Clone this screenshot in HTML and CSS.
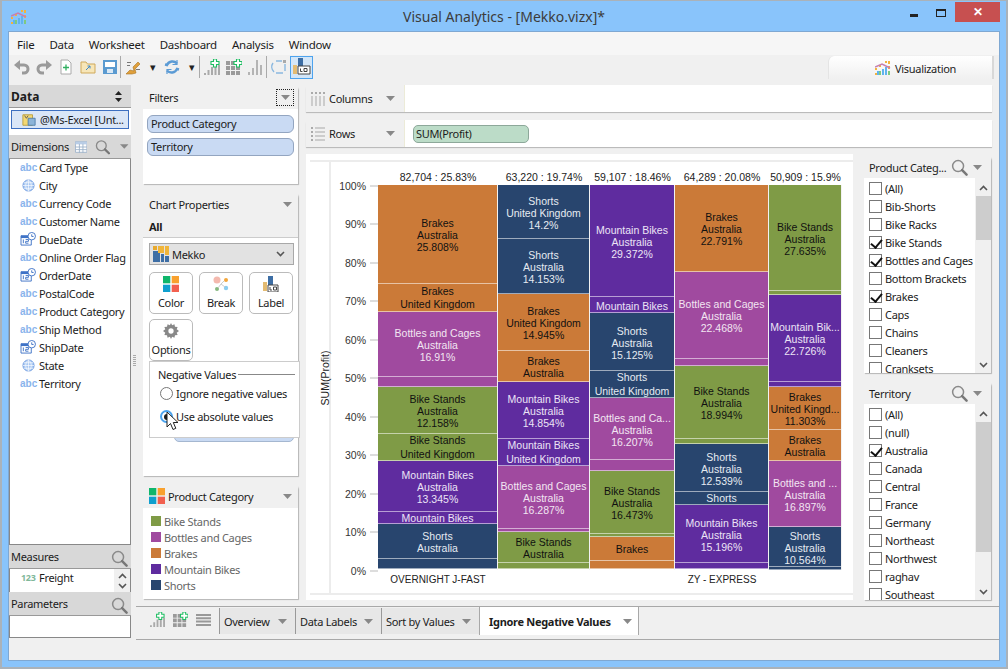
FILE: index.html
```html
<!DOCTYPE html>
<html lang="en">
<head>
<meta charset="utf-8">
<title>Visual Analytics - [Mekko.vizx]*</title>
<link rel="stylesheet" href="styles.css">
</head>
<body>
<svg class="sprite" xmlns="http://www.w3.org/2000/svg">
  <symbol id="i-search" viewBox="0 0 18 18"><circle cx="7.500" cy="7.500" r="5.800" fill="none" stroke="#8a8a8a" stroke-width="1.600"/><path d="M11.800 11.800L16.500 16.500" stroke="#777" stroke-width="2.600" stroke-linecap="round"/></symbol>
  <symbol id="i-globe" viewBox="0 0 14 14"><circle cx="7" cy="7" r="6" fill="#a9c8f2" stroke="#6f9ce0"/><path d="M1 7h12M7 1v12M2 4h10M2 10h10M7 1c-4 3-4 9 0 12M7 1c4 3 4 9 0 12" fill="none" stroke="#fff" stroke-width=".7"/></symbol>
  <symbol id="i-date" viewBox="0 0 17 15"><path d="M1 4h11v10H1z" fill="#fff" stroke="#3f73c6"/><path d="M1 4h11v2.500H1z" fill="#3f73c6"/><path d="M3.500 8v4M6 8h3v2H6v2h3" fill="none" stroke="#3f73c6"/><circle cx="12.500" cy="4.500" r="4" fill="#fff" stroke="#3f73c6"/><path d="M12.500 2.500v2.300h2" fill="none" stroke="#3f73c6"/></symbol>
  <symbol id="i-color" viewBox="0 0 16 16"><path d="M0 0h7.300v7.300H0z" fill="#0fb66b"/><path d="M8.700 0H16v7.300H8.700z" fill="#f9a12e"/><path d="M0 8.700h7.300V16H0z" fill="#0f9fce"/><path d="M8.700 8.700H16V16H8.700z" fill="#f2604f"/></symbol>
  <symbol id="i-addchart" viewBox="0 0 16 16"><path d="M0 14h2v2H0zM3.500 11h2v5h-2zM7 8h2v8H7zM10.500 8h2v8h-2zM14 6h2v10h-2z" fill="#aaa"/><path d="M9 3h2.500V.5h3V3H17v3h-2.500v2.500h-3V6H9z" transform="translate(-2 -.5)" fill="#fff" stroke="#1fbd62" stroke-width="1.100"/></symbol>
  <symbol id="i-addgrid" viewBox="0 0 16 16"><path d="M0 2h4v4H0zM5 2h4v4H5zM0 7h4v4H0zM5 7h4v4H5zM10 7h4v4h-4zM0 12h4v4H0zM5 12h4v4H5zM10 12h4v4h-4z" fill="#9a9a9a"/><path d="M9 3h2.500V.5h3V3H17v3h-2.500v2.500h-3V6H9z" transform="translate(-1 -.5)" fill="#fff" stroke="#1fbd62" stroke-width="1.100"/></symbol>
  <symbol id="i-rows" viewBox="0 0 15 12"><path d="M0 0h15v2H0zM0 3.300h15v2H0zM0 6.600h15v2H0zM0 9.900h15v2H0z" fill="#999"/></symbol>
  <symbol id="i-viz" viewBox="0 0 16 16"><path d="M2 11h2v4H2zM7 9h2v6H7zM10 7h2v8h-2z" fill="#5fb4ee"/><path d="M13 1h2v3h-2zM13 6h2v3h-2z" fill="#f3b33d"/><path d="M0 8h2v2H0zM0 13h2v2H0zM4 5h2v2H4zM10 1h2v2h-2z" fill="#f3b33d"/><path d="M0 7l7-3 8 4" fill="none" stroke="#c77fb0" stroke-width="1.400"/><path d="M4 11h2v4H4zM13 11h2v4h-2z" fill="#7fc97f"/></symbol>
  <symbol id="i-caret" viewBox="0 0 9 5"><path d="M0 0h9L4.500 5z" fill="#888"/></symbol>
  <symbol id="i-up" viewBox="0 0 9 6"><path d="M1 5l3.500-3.500L8 5" fill="none" stroke="#555" stroke-width="1.600"/></symbol>
  <symbol id="i-down" viewBox="0 0 9 6"><path d="M1 1l3.500 3.500L8 1" fill="none" stroke="#555" stroke-width="1.600"/></symbol>
</svg>

<div class="window">
  <header class="titlebar">
    <svg class="app-icon"><use href="#i-viz"/></svg>
    <span class="title">Visual Analytics - [Mekko.vizx]*</span>
    <div class="winbtns">
      <span class="win-min"></span>
      <span class="win-max"></span>
      <span class="win-close">✕</span>
    </div>
  </header>

  <div class="client">
    <nav class="menubar">
      <span>File</span><span>Data</span><span>Worksheet</span><span>Dashboard</span><span>Analysis</span><span>Window</span>
    </nav>

    <div class="toolbar">
      <svg class="tb" viewBox="0 0 16 16"><path d="M0 6l6-5v10z" fill="#9a9a9a"/><path d="M4 6h6a4 4 0 0 1 0 8H8" fill="none" stroke="#9a9a9a" stroke-width="3"/></svg>
      <svg class="tb" viewBox="0 0 16 16"><path d="M16 6l-6-5v10z" fill="#9a9a9a"/><path d="M12 6H6a4 4 0 0 0 0 8h2" fill="none" stroke="#9a9a9a" stroke-width="3"/></svg>
      <svg class="tb" viewBox="0 0 16 16"><path d="M3 1h7l3 3v11H3z" fill="#fff" stroke="#aaa"/><path d="M8 5.500v6M5 8.500h6" stroke="#30b060" stroke-width="1.300"/></svg>
      <svg class="tb" viewBox="0 0 16 16"><path d="M1 3h5l1.500 2H15v9H1z" fill="#f7e6b8" stroke="#cfa95a"/><path d="M6 11l4-4M7.500 7H10v2.500" fill="none" stroke="#3d87c8"/></svg>
      <svg class="tb" viewBox="0 0 16 16"><path d="M2 2h12v12H2z" fill="#fff" stroke="#5a9ad0" stroke-width="2"/><path d="M2 8h12v6H2z" fill="#5a9ad0"/><path d="M5 10h6v4H5z" fill="#d9e8f5"/></svg>
      <span class="tb-sep"></span>
      <svg class="tb" viewBox="0 0 16 16"><path d="M1 15l4-4 4 1-1-4 5-5 2 2-5 5 1 4-4 1z" fill="#e0a03c" stroke="#a97422" stroke-width=".6"/><path d="M2 3h4v1H2zM2 6h3v1H2zM11 10h4v1h-4z" fill="#777"/></svg>
      <span class="tb-caret">▾</span>
      <svg class="tb" viewBox="0 0 16 16"><path d="M13 4.500A6 6 0 0 0 3 6l-2-.5M3 11.500A6 6 0 0 0 13 10l2 .5" fill="none" stroke="#5b9bd5" stroke-width="2.400"/><path d="M13 1v4.500H8.500M3 15v-4.500h4.500" fill="none" stroke="#5b9bd5" stroke-width="1.200"/></svg>
      <span class="tb-caret">▾</span>
      <span class="tb-sep"></span>
      <svg class="tb"><use href="#i-addchart"/></svg>
      <svg class="tb"><use href="#i-addgrid"/></svg>
      <svg class="tb" viewBox="0 0 16 16"><path d="M0 13h2v3H0zM4 9h2v7H4zM8 1h2v15H8zM12 6h2v10h-2z" fill="#b4b4b4"/></svg>
      <span class="tb-sep"></span>
      <svg class="tb" viewBox="0 0 16 16"><path d="M2 4a7 7 0 0 0 1 9M5 14h7M14 12V5M11 2H5" fill="none" stroke="#8ab8e0" stroke-width="1.400"/><path d="M12 1h3v3h-3z" fill="#aaa"/></svg>
      <span class="tb-active">
        <svg class="tb-ai" viewBox="0 0 18 18"><path d="M0 7h4v9H0z" fill="#e3bb72"/><path d="M5 0h5v11H5z" fill="#3d6ea5"/><path d="M5 8h12v8H5z" fill="#fff" stroke="#444"/><path d="M7.500 10.500v3h2M11 10.500h3v3h-3z" fill="none" stroke="#444"/></svg>
      </span>
      <div class="viz-tab">
        <svg class="viz-icon"><use href="#i-viz"/></svg>
        <span>Visualization</span>
      </div>
    </div>

    <main class="main">
      <aside class="sidebar">
        <div class="side-head side-data"><b>Data</b><svg class="updown" viewBox="0 0 7 11"><path d="M3.500 0L7 4H0zM3.500 11L0 7h7z" fill="#222"/></svg></div>
        <div class="source-wrap">
          <div class="source">
            <svg class="source-icon" viewBox="0 0 16 14"><path d="M1 1h11v12H1z" fill="#f3d873" stroke="#b89b3a"/><path d="M7 5h8v8H7z" fill="#8cb4d8" stroke="#4d7da8"/><path d="M3 2l2 3 2-3" fill="none" stroke="#555"/></svg>
            <span>@Ms-Excel [Unt...</span>
          </div>
        </div>
        <div class="side-head side-dim">
          <span>Dimensions</span>
          <svg class="dim-table" viewBox="0 0 14 13"><path d="M.5.500h13v12H.5z" fill="#fff" stroke="#9bb0c8"/><path d="M.5.500h13v3H.500z" fill="#b9cde6"/><path d="M.5 6.500h13M.5 9.500h13M5 3v10M9 3v10" stroke="#9bb0c8" fill="none"/></svg>
          <svg class="side-search"><use href="#i-search"/></svg>
          <svg class="side-caret"><use href="#i-caret"/></svg>
        </div>
        <ul class="dimlist">
          <li><span class="abc">abc</span>Card Type</li>
          <li><span class="fi"><svg class="globe"><use href="#i-globe"/></svg></span>City</li>
          <li><span class="abc">abc</span>Currency Code</li>
          <li><span class="abc">abc</span>Customer Name</li>
          <li><span class="fi"><svg class="date"><use href="#i-date"/></svg></span>DueDate</li>
          <li><span class="abc">abc</span>Online Order Flag</li>
          <li><span class="fi"><svg class="date"><use href="#i-date"/></svg></span>OrderDate</li>
          <li><span class="abc">abc</span>PostalCode</li>
          <li><span class="abc">abc</span>Product Category</li>
          <li><span class="abc">abc</span>Ship Method</li>
          <li><span class="fi"><svg class="date"><use href="#i-date"/></svg></span>ShipDate</li>
          <li><span class="fi"><svg class="globe"><use href="#i-globe"/></svg></span>State</li>
          <li><span class="abc">abc</span>Territory</li>
        </ul>
        <div class="side-head side-sub"><span>Measures</span><svg class="sub-search"><use href="#i-search"/></svg></div>
        <div class="measure">
          <span class="n123">123</span><span class="m-text">Freight</span>
          <span class="m-scroll"><svg class="m-arrow"><use href="#i-up"/></svg><svg class="m-arrow"><use href="#i-down"/></svg></span>
        </div>
        <div class="side-head side-sub"><span>Parameters</span><svg class="sub-search"><use href="#i-search"/></svg></div>
        <div class="params"></div>
      </aside>

      <span class="splitter"></span>

      <section class="work">
        <div class="work-top">
          <div class="midcol">
            <section class="panel filters">
              <header class="panel-head">
                <span>Filters</span>
                <span class="dotted"><svg class="cap"><use href="#i-caret"/></svg></span>
              </header>
              <div class="pills">
                <div class="pill">Product Category</div>
                <div class="pill">Territory</div>
              </div>
            </section>

            <section class="panel props">
              <header class="panel-head"><span>Chart Properties</span><svg class="cap"><use href="#i-caret"/></svg></header>
              <div class="all">All</div>
              <div class="chart-select">
                <svg class="mekko-ico" viewBox="0 0 16 16"><path d="M0 0h4v4H0z" fill="#e8a92e"/><path d="M0 5h7v11H0z" fill="#3d6ea5"/><path d="M5 0h6v7H5z" fill="#f0b53a"/><path d="M12 0h4v9h-4z" fill="#f0b53a"/><path d="M8 8h3v8H8zM12 10h4v6h-4z" fill="#3d6ea5"/></svg>
                <span>Mekko</span>
                <svg class="chev"><use href="#i-down"/></svg>
              </div>
              <div class="prop-btns">
                <div class="prop-btn"><svg class="pb-ico"><use href="#i-color"/></svg><span>Color</span></div>
                <div class="prop-btn"><svg class="pb-ico" viewBox="0 0 16 16"><circle cx="4" cy="4" r="3.500" fill="#f4b9ae"/><circle cx="13" cy="4" r="2" fill="#f3a63b"/><circle cx="4" cy="13" r="2" fill="#86b97f"/><circle cx="13" cy="12" r="2.200" fill="#8ccdf0"/><path d="M8 8l3-3M8 8l-3 4M8 8l4 3" stroke="#ccc"/></svg><span>Break</span></div>
                <div class="prop-btn"><svg class="pb-ico" viewBox="0 0 16 16"><path d="M0 6h4v9H0z" fill="#e3bb72"/><path d="M5 0h5v10H5z" fill="#3d6ea5"/><path d="M5 9h10v7H5z" fill="#fff" stroke="#444"/><path d="M7 11v3h2M10.500 11h3v3h-3z" fill="none" stroke="#444"/></svg><span>Label</span></div>
                <div class="prop-btn"><svg class="pb-ico" viewBox="0 0 14 14"><path d="M7 0l1 2 2-1 .5 2.200 2.300.3-.8 2 2 1.500-2 1.500.8 2-2.300.3L10 13l-2-1-1 2-1-2-2 1-.5-2.200-2.300-.3.8-2L0 7l2-1.500-.8-2 2.300-.3L4 1l2 1z" fill="#888"/><circle cx="7" cy="7" r="2.300" fill="#fff"/></svg><span>Options</span></div>
              </div>
              <div class="under-btn"></div>
              <div class="popup">
                <div class="legend-line"><span>Negative Values</span><i></i></div>
                <label class="radio-row"><span class="radio"></span>Ignore negative values</label>
                <label class="radio-row"><span class="radio on"></span>Use absolute values</label>
                <svg class="cursor" viewBox="0 0 13 20"><path d="M1 1v15l3.500-3.500L7 18.500l2.800-1.200-2.500-5.800H12z" fill="#fff" stroke="#222"/></svg>
              </div>
            </section>

            <section class="panel legend">
              <header class="panel-head"><svg class="leg-ico"><use href="#i-color"/></svg><span class="leg-title">Product Category</span><svg class="cap"><use href="#i-caret"/></svg></header>
              <ul class="leg-list">
                <li><i class="sw c-green"></i>Bike Stands</li>
                <li><i class="sw c-mag"></i>Bottles and Cages</li>
                <li><i class="sw c-org"></i>Brakes</li>
                <li><i class="sw c-pur"></i>Mountain Bikes</li>
                <li><i class="sw c-nav"></i>Shorts</li>
              </ul>
            </section>
          </div>

          <div class="rightcol">
            <div class="shelf">
              <div class="shelf-label"><svg class="shelf-ico" viewBox="0 0 14 14"><path d="M0 0h2v2H0zM4 0h2v2H4zM8 0h2v2H8zM12 0h2v2h-2z" fill="#aaa"/><path d="M0 4h2v10H0zM4 4h2v10H4zM8 4h2v10H8zM12 4h2v10h-2z" fill="#ccc"/></svg><span>Columns</span><svg class="cap"><use href="#i-caret"/></svg></div>
              <div class="shelf-body"></div>
            </div>
            <div class="shelf">
              <div class="shelf-label"><svg class="shelf-ico" viewBox="0 0 14 14"><path d="M0 0h2v2H0zM0 4h2v2H0zM0 8h2v2H0zM0 12h2v2H0z" fill="#aaa"/><path d="M4 0h10v2H4zM4 4h10v2H4zM4 8h10v2H4zM4 12h10v2H4z" fill="#ccc"/></svg><span>Rows</span><svg class="cap"><use href="#i-caret"/></svg></div>
              <div class="shelf-body"><div class="green-pill">SUM(Profit)</div></div>
            </div>

            <div class="lower">
              <section class="chart">
                <div class="frame">
                  <div class="ytitle"><span>SUM(Profit)</span></div>
                  <div class="yaxis">
                    <span>100%</span><span>90%</span><span>80%</span><span>70%</span><span>60%</span><span>50%</span><span>40%</span><span>30%</span><span>20%</span><span>10%</span><span>0%</span>
                  </div>
                  <div class="plot">
                    <div class="col" style="width:120px">
                      <div class="col-top">82,704 : 25.83%</div>
                      <div class="bars">
                        <div class="seg c-org" style="height:99px">Brakes<br>Australia<br>25.808%</div>
                        <div class="seg c-org tw" style="height:28px">Brakes<br>United Kingdom</div>
                        <div class="seg c-mag" style="height:65px">Bottles and Cages<br>Australia<br>16.91%</div>
                        <div class="seg c-mag" style="height:10px"></div>
                        <div class="seg c-green" style="height:47px">Bike Stands<br>Australia<br>12.158%</div>
                        <div class="seg c-green tw" style="height:27px">Bike Stands<br>United Kingdom</div>
                        <div class="seg c-pur" style="height:51px">Mountain Bikes<br>Australia<br>13.345%</div>
                        <div class="seg c-pur one" style="height:12px">Mountain Bikes</div>
                        <div class="seg c-nav" style="height:35px">Shorts<br>Australia</div>
                        <div class="seg c-nav" style="height:10px"></div>
                      </div>
                      <div class="col-foot">OVERNIGHT J-FAST</div>
                    </div>
                    <div class="col" style="width:92px">
                      <div class="col-top">63,220 : 19.74%</div>
                      <div class="bars">
                        <div class="seg c-nav" style="height:54px">Shorts<br>United Kingdom<br>14.2%</div>
                        <div class="seg c-nav" style="height:55px">Shorts<br>Australia<br>14.153%</div>
                        <div class="seg c-org" style="height:57px">Brakes<br>United Kingdom<br>14.945%</div>
                        <div class="seg c-org" style="height:31px">Brakes<br>Australia</div>
                        <div class="seg c-pur" style="height:57px">Mountain Bikes<br>Australia<br>14.854%</div>
                        <div class="seg c-pur tw" style="height:27px">Mountain Bikes<br>United Kingdom</div>
                        <div class="seg c-mag" style="height:63px">Bottles and Cages<br>Australia<br>16.287%</div>
                        <div class="seg c-mag" style="height:3px"></div>
                        <div class="seg c-green" style="height:31px">Bike Stands<br>Australia</div>
                        <div class="seg c-green" style="height:6px"></div>
                      </div>
                      <div class="col-foot"></div>
                    </div>
                    <div class="col" style="width:85px">
                      <div class="col-top">59,107 : 18.46%</div>
                      <div class="bars">
                        <div class="seg c-pur" style="height:112px">Mountain Bikes<br>Australia<br>29.372%</div>
                        <div class="seg c-pur" style="height:16px">Mountain Bikes</div>
                        <div class="seg c-nav" style="height:58px">Shorts<br>Australia<br>15.125%</div>
                        <div class="seg c-nav tw" style="height:27px">Shorts<br>United Kingdom</div>
                        <div class="seg c-mag" style="height:62px">Bottles and Ca...<br>Australia<br>16.207%</div>
                        <div class="seg c-mag" style="height:11px"></div>
                        <div class="seg c-green" style="height:63px">Bike Stands<br>Australia<br>16.473%</div>
                        <div class="seg c-green" style="height:3px"></div>
                        <div class="seg c-org one" style="height:24px">Brakes</div>
                        <div class="seg c-org" style="height:8px"></div>
                      </div>
                      <div class="col-foot"></div>
                    </div>
                    <div class="col" style="width:94px">
                      <div class="col-top">64,289 : 20.08%</div>
                      <div class="bars">
                        <div class="seg c-org" style="height:87px">Brakes<br>Australia<br>22.791%</div>
                        <div class="seg c-mag" style="height:87px">Bottles and Cages<br>Australia<br>22.468%</div>
                        <div class="seg c-mag" style="height:7px"></div>
                        <div class="seg c-green" style="height:73px">Bike Stands<br>Australia<br>18.994%</div>
                        <div class="seg c-green" style="height:5px"></div>
                        <div class="seg c-nav" style="height:48px">Shorts<br>Australia<br>12.539%</div>
                        <div class="seg c-nav one" style="height:13px">Shorts</div>
                        <div class="seg c-pur" style="height:58px">Mountain Bikes<br>Australia<br>15.196%</div>
                        <div class="seg c-pur" style="height:6px"></div>
                      </div>
                      <div class="col-foot">ZY - EXPRESS</div>
                    </div>
                    <div class="col" style="width:73px">
                      <div class="col-top">50,909 : 15.9%</div>
                      <div class="bars">
                        <div class="seg c-green" style="height:106px">Bike Stands<br>Australia<br>27.635%</div>
                        <div class="seg c-green" style="height:4px"></div>
                        <div class="seg c-pur" style="height:87px">Mountain Bik...<br>Australia<br>22.726%</div>
                        <div class="seg c-pur" style="height:5px"></div>
                        <div class="seg c-org" style="height:43px">Brakes<br>United Kingd...<br>11.303%</div>
                        <div class="seg c-org" style="height:31px">Brakes<br>Australia</div>
                        <div class="seg c-mag" style="height:66px">Bottles and ...<br>Australia<br>16.897%</div>
                        <div class="seg c-nav" style="height:40px">Shorts<br>Australia<br>10.564%</div>
                        <div class="seg c-nav" style="height:2px"></div>
                      </div>
                      <div class="col-foot"></div>
                    </div>
                  </div>
                </div>
              </section>

              <div class="filtercol">
                <section class="panel qf qf-a">
                  <header class="panel-head qf-head"><span class="qf-title">Product Categ...</span><svg class="qf-search"><use href="#i-search"/></svg><svg class="cap"><use href="#i-caret"/></svg></header>
                  <div class="qf-body">
                    <ul class="qf-list">
                      <li><i class="cb"></i>(All)</li>
                      <li><i class="cb"></i>Bib-Shorts</li>
                      <li><i class="cb"></i>Bike Racks</li>
                      <li><i class="cb on"></i>Bike Stands</li>
                      <li><i class="cb on"></i>Bottles and Cages</li>
                      <li><i class="cb"></i>Bottom Brackets</li>
                      <li><i class="cb on"></i>Brakes</li>
                      <li><i class="cb"></i>Caps</li>
                      <li><i class="cb"></i>Chains</li>
                      <li><i class="cb"></i>Cleaners</li>
                      <li><i class="cb"></i>Cranksets</li>
                    </ul>
                    <div class="scroll">
                      <svg class="arrow"><use href="#i-up"/></svg>
                      <div class="track t1"></div>
                      <svg class="arrow"><use href="#i-down"/></svg>
                    </div>
                  </div>
                </section>
                <section class="panel qf">
                  <header class="panel-head qf-head"><span class="qf-title">Territory</span><svg class="qf-search"><use href="#i-search"/></svg><svg class="cap"><use href="#i-caret"/></svg></header>
                  <div class="qf-body">
                    <ul class="qf-list">
                      <li><i class="cb"></i>(All)</li>
                      <li><i class="cb"></i>(null)</li>
                      <li><i class="cb on"></i>Australia</li>
                      <li><i class="cb"></i>Canada</li>
                      <li><i class="cb"></i>Central</li>
                      <li><i class="cb"></i>France</li>
                      <li><i class="cb"></i>Germany</li>
                      <li><i class="cb"></i>Northeast</li>
                      <li><i class="cb"></i>Northwest</li>
                      <li><i class="cb"></i>raghav</li>
                      <li><i class="cb"></i>Southeast</li>
                    </ul>
                    <div class="scroll">
                      <svg class="arrow"><use href="#i-up"/></svg>
                      <div class="track t2"></div>
                      <svg class="arrow"><use href="#i-down"/></svg>
                    </div>
                  </div>
                </section>
              </div>
            </div>
          </div>
        </div>

        <div class="tabbar">
          <div class="tab-tools">
            <svg class="tt"><use href="#i-addchart"/></svg>
            <svg class="tt"><use href="#i-addgrid"/></svg>
            <svg class="tt tt-rows"><use href="#i-rows"/></svg>
          </div>
          <div class="tab t1w"><span>Overview</span><svg class="cap"><use href="#i-caret"/></svg></div>
          <div class="tab t2w"><span>Data Labels</span><svg class="cap"><use href="#i-caret"/></svg></div>
          <div class="tab t3w"><span>Sort by Values</span><svg class="cap"><use href="#i-caret"/></svg></div>
          <div class="tab active"><span>Ignore Negative Values</span><svg class="cap"><use href="#i-caret"/></svg></div>
        </div>
      </section>
    </main>

    <footer class="status"></footer>
  </div>
</div>
</body>
</html>
```

FILE: styles.css
```css
* { box-sizing: border-box; }
html, body { margin: 0; padding: 0; }
body {
  width: 1008px;
  height: 669px;
  overflow: hidden;
  font-family: "Noto Sans", "Liberation Sans", sans-serif;
  font-size: 11px;
  letter-spacing: -.3px;
  color: #1c1c1c;
}
ul { list-style: none; margin: 0; padding: 0; }
.sprite { display: none; }

.window {
  width: 1008px;
  height: 669px;
  display: flex;
  flex-direction: column;
  background: #89c4fb;
  border: solid #aab2b9;
  border-width: 1px 2px 2px 2px;
}

/* title bar */
.titlebar {
  height: 30px;
  display: flex;
  align-items: center;
  position: relative;
  flex: none;
}
.app-icon { width: 16px; height: 16px; margin-left: 9px; margin-top: 2px; }
.title {
  position: absolute;
  left: 0; right: 0;
  top: 6px;
  text-align: center;
  font-size: 14px;
  letter-spacing: 0;
  line-height: 20px;
  color: #3c3c3c;
}
.winbtns {
  position: absolute;
  top: 1px; right: 6px;
  display: flex;
  align-items: flex-start;
}
.win-min { width: 8px; height: 3px; background: #222; margin: 12px 18px 0 0; }
.win-max { width: 10px; height: 8px; border: 1px solid #222; border-top-width: 2px; margin: 7px 9px 0 0; }
.win-close {
  width: 45px; height: 20px;
  background: #c75050;
  color: #fff;
  font-size: 12px;
  font-weight: bold;
  line-height: 20px;
  text-align: center;
}

.client {
  flex: 1;
  margin: 0 6px 6px 6px;
  border: 1px solid #7fa8d2;
  background: #f0f0f0;
  display: flex;
  flex-direction: column;
  min-height: 0;
}

.menubar {
  height: 23px;
  flex: none;
  display: flex;
  align-items: center;
  gap: 15px;
  padding: 2px 0 0 8px;
  background: #f6f6f6;
  font-size: 11.500px;
  letter-spacing: -.25px;
}

/* toolbar */
.toolbar {
  height: 29px;
  flex: none;
  display: flex;
  align-items: center;
  background: #f0f0f0;
  padding: 0 0 5px 5px;
  position: relative;
}
.tb { width: 16px; height: 16px; margin-right: 6px; flex: none; }
.tb-sep { width: 1px; height: 22px; background: #aaa; margin: 0 4px 0 -4px; flex: none; }
.tb-caret { font-size: 11px; line-height: 16px; width: 8px; margin: 0 6px 0 3px; color: #222; flex: none; }
.tb-active {
  width: 23px; height: 23px;
  border: 1px solid #4da3ee;
  background: #d3e6f8;
  display: flex; align-items: center; justify-content: center;
  margin-left: -3px;
}
.tb-ai { width: 18px; height: 18px; }
.viz-tab {
  position: absolute;
  right: 5px; top: 1px;
  width: 166px; height: 23px;
  background: linear-gradient(#fff, #f0f0f0);
  border-top-left-radius: 6px;
  border-left: 1px solid #e4e4e4;
  border-right: 2px solid #d8d8d8;
  display: flex; align-items: center;
  padding: 1px 0 0 46px;
  gap: 4px;
}
.viz-icon { width: 16px; height: 16px; }

.main { flex: 1; display: flex; min-height: 0; }

/* sidebar */
.sidebar {
  width: 122px;
  flex: none;
  display: flex;
  flex-direction: column;
}
.side-head {
  background: #d8d8d8;
  display: flex;
  align-items: center;
  padding: 0 2px;
  flex: none;
  position: relative;
}
.side-data { height: 23px; margin-top: 1px; font-size: 12px; letter-spacing: 0; border-bottom: 1px solid #999; }
.updown { position: absolute; right: 9px; top: 6px; width: 7px; height: 11px; }
.source-wrap { background: #fff; height: 27px; padding: 2px; flex: none; }
.source {
  height: 19px;
  border: 1px solid #3c6fc0;
  background: #d9e6f7;
  display: flex; align-items: center;
  padding-left: 10px;
  gap: 4px;
  white-space: nowrap;
}
.source-icon { width: 14px; height: 14px; flex: none; }
.side-dim { height: 24px; border-bottom: 1px solid #999; }
.dim-table { width: 13px; height: 12px; margin-left: 6px; }
.side-search { width: 16px; height: 16px; margin-left: 8px; }
.side-caret { width: 9px; height: 5px; margin-left: 10px; }
.dimlist {
  flex: 1;
  background: #fff;
  border-left: 1px solid #888;
  border-right: 1px solid #888;
  border-bottom: 1px solid #888;
  min-height: 0;
}
.dimlist li { height: 18px; display: flex; align-items: center; white-space: nowrap; padding-bottom: 2px; }
.abc {
  width: 29px;
  padding-left: 10px;
  color: #8ab4ec;
  font-family: "Liberation Sans", Arial, sans-serif;
  font-size: 10px;
  letter-spacing: 0;
  font-weight: bold;
  flex: none;
}
.fi { width: 29px; padding-left: 10px; flex: none; display: flex; align-items: center; }
.globe { width: 13px; height: 13px; margin-left: 2px; }
.date { width: 16px; height: 14px; }
.side-sub { height: 24px; border-bottom: 1px solid #999; }
.sub-search { position: absolute; right: 3px; top: 5px; width: 17px; height: 17px; }
.measure {
  height: 23px;
  flex: none;
  background: #fff;
  border-left: 1px solid #888;
  border-right: 1px solid #888;
  display: flex;
  align-items: flex-start;
  padding-left: 11px;
  line-height: 18px;
  position: relative;
}
.n123 { color: #7fb89a; font-size: 9px; font-weight: bold; width: 18px; }
.m-scroll {
  position: absolute;
  right: 0; top: 0; bottom: 0;
  width: 16px;
  background: #f0f0f0;
  display: flex; flex-direction: column;
  align-items: center;
  justify-content: center;
  gap: 4px;
}
.m-arrow { width: 9px; height: 6px; }
.params {
  height: 22px;
  flex: none;
  background: #fff;
  border: 1px solid #888;
  border-top: 0;
  margin-bottom: 2px;
}

.splitter {
  width: 12px; flex: none;
  background: repeating-linear-gradient(#aaa 0 1px, transparent 1px 2px) 2px 271px / 3px 12px no-repeat;
}

.work { flex: 1; display: flex; flex-direction: column; min-width: 0; margin-left: -7px; }
.work-top { height: 522px; flex: none; display: flex; padding-left: 7px; }

/* panels */
.midcol { width: 155px; flex: none; display: flex; flex-direction: column; gap: 8px; padding-top: 1px; }
.panel {
  background: #fff;
  box-shadow: 1px 1px 1px #b5b5b5;
  border-top-left-radius: 5px;
  border-top-right-radius: 5px;
  position: relative;
}
.panel-head {
  height: 24px;
  background: #f0f0f0;
  display: flex;
  align-items: center;
  padding: 0 6px;
  justify-content: space-between;
}
.cap { width: 9px; height: 5px; flex: none; }
.filters { height: 99px; }
.dotted {
  width: 18px; height: 17px;
  border: 1px dotted #222;
  display: flex; align-items: center; justify-content: center;
  margin-right: -2px;
}
.pills { padding: 6px 4px; display: flex; flex-direction: column; gap: 5px; }
.pill {
  height: 18px;
  background: #c9daf3;
  border: 1px solid #93a5c0;
  border-radius: 6px;
  line-height: 15px;
  padding-left: 3px;
}
.props { height: 284px; }
.props .panel-head { height: 25px; }
.all {
  height: 21px;
  background: #f0f0f0;
  border-bottom: 1px solid #ccc;
  font-weight: bold;
  line-height: 20px;
  padding-left: 6px;
}
.chart-select {
  height: 22px;
  margin: 5px 4px 0 6px;
  background: #e2e2e2;
  border: 1px solid #a8a8a8;
  display: flex; align-items: center;
  padding: 0 8px 0 3px;
  gap: 3px;
}
.mekko-ico { width: 16px; height: 16px; }
.chev { width: 9px; height: 6px; margin-left: auto; }
.prop-btns {
  display: grid;
  grid-template-columns: repeat(3, 44px);
  column-gap: 6px;
  row-gap: 5px;
  margin: 7px 0 0 6px;
}
.prop-btn {
  height: 42px;
  border: 1px solid #bbb;
  border-radius: 5px;
  display: flex; flex-direction: column;
  align-items: center;
  padding-top: 3px;
  gap: 4px;
  line-height: 14px;
  background: #fff;
}
.pb-ico { width: 16px; height: 16px; }
.under-btn {
  position: absolute;
  left: 31px; top: 236px;
  width: 120px; height: 14px;
  background: #c9daf3;
  border: 1px solid #a5b7d0;
  border-radius: 5px;
}
.popup {
  position: absolute;
  left: 6px; top: 169px;
  width: 151px; height: 77px;
  background: #fff;
  border: 1px solid #ccc;
  padding: 4px 4px 0 8px;
  z-index: 2;
}
.legend-line { display: flex; align-items: center; gap: 2px; height: 16px; }
.legend-line i { flex: 1; height: 1px; background: #888; }
.radio-row { display: flex; align-items: center; height: 23px; gap: 3px; padding-left: 2px; }
.radio { width: 13px; height: 13px; border: 1px solid #777; border-radius: 50%; background: #fff; flex: none; position: relative; }
.radio.on { border: 2px solid #4ba3ee; }
.radio.on::after { content: ""; position: absolute; left: 1.500px; top: 1.500px; width: 6px; height: 6px; background: #1c1c1c; border-radius: 50%; }
.cursor { position: absolute; left: 16px; top: 49px; width: 13px; height: 20px; }
.legend { height: 115px; }
.leg-ico { width: 16px; height: 16px; flex: none; }
.leg-title { margin-right: auto; margin-left: 3px; }
.leg-list { padding: 5px 0 0 8px; color: #666; }
.leg-list li { height: 16px; display: flex; align-items: center; gap: 3px; }
.sw { width: 10px; height: 10px; flex: none; }
.c-green { background: #7f9b46; color: #111; }
.c-mag { background: #a04a9f; color: #f2e6f2; }
.c-org { background: #cb7a38; color: #111; }
.c-pur { background: #5f2c9f; color: #ece4f6; }
.c-nav { background: #28456e; color: #e6ebf2; }

/* right column */
.rightcol { flex: 1; min-width: 0; display: flex; flex-direction: column; padding: 1px 7px 0 8px; }
.shelf {
  height: 27px;
  flex: none;
  display: flex;
  background: #fff;
  box-shadow: 0 1px 1px #b5b5b5;
  border-top-left-radius: 4px;
  margin-bottom: 8px;
}
.shelf-label {
  width: 98px; flex: none;
  background: #f0f0f0;
  display: flex; align-items: center;
  padding-left: 5px;
}
.shelf-label .cap { margin-left: auto; margin-right: 9px; }
.shelf-ico { width: 14px; height: 14px; margin-right: 4px; }
.shelf-body { flex: 1; border-left: 1px solid #ecebd8; display: flex; align-items: center; padding-left: 8px; }
.green-pill {
  width: 116px; height: 18px;
  background: #bcdcc8;
  border: 1px solid #8da89a;
  border-radius: 5px;
  line-height: 15px;
  padding-left: 2px;
}
.lower { flex: 1; min-height: 0; display: flex; margin-top: -1px; }

/* chart */
.chart {
  width: 547px;
  flex: none;
  height: 446px;
  background: #fff;
  padding: 6px 0 5px 4px;
}
.frame {
  height: 435px;
  border-top: 2px solid #ececec;
  border-bottom: 2px solid #ececec;
  display: flex;
  font-family: "Liberation Sans", Arial, sans-serif;
  font-size: 10.500px;
  letter-spacing: 0;
}
.ytitle {
  width: 21px; flex: none;
  border-right: 2px solid #ececec;
  display: flex; align-items: center; justify-content: center;
  padding-left: 11px;
}
.ytitle span { transform: rotate(-90deg); white-space: nowrap; color: #222; }
.yaxis {
  width: 47px;
  flex: none;
  margin: 17.500px 0 16px;
  display: flex; flex-direction: column;
  justify-content: space-between;
  align-items: stretch;
  text-align: right;
}
.yaxis span {
  display: block;
  line-height: 12px;
  padding-right: 12px;
  color: #333;
  background: linear-gradient(#ddd, #ddd) right center / 8px 2px no-repeat;
}
.plot { display: flex; flex: none; }
.col { flex: none; display: flex; flex-direction: column; }
.col-top {
  height: 23px;
  line-height: 30px;
  text-align: center;
  white-space: nowrap;
  color: #222;
  margin: 0 -10px;
}
.bars { height: 385px; display: flex; flex-direction: column; border-right: 1px solid #f2f2f2; }
.seg {
  flex: none;
  border-bottom: 1px solid rgba(255, 255, 255, .55);
  padding-top: 2px;
  display: flex;
  align-items: center;
  justify-content: center;
  text-align: center;
  line-height: 12px;
  overflow: hidden;
  white-space: nowrap;
}
.seg.tw { line-height: 13.500px; padding-top: 1px; }
.seg.one { padding-top: 0; }
.col-foot { height: 20px; line-height: 20px; font-size: 10px; text-align: center; white-space: nowrap; margin: 0 -10px; color: #222; }

/* quick filters */
.filtercol { width: 127px; flex: none; margin-left: 11px; display: flex; flex-direction: column; gap: 8px; padding-top: 1px; }
.qf { height: 219px; display: flex; flex-direction: column; }
.qf-a { height: 218px; }
.qf-head { height: 23px; flex: none; padding: 2px 9px 0 5px; justify-content: flex-start; }
.qf-title { margin-right: auto; white-space: nowrap; }
.qf-search { width: 17px; height: 17px; margin-right: 5px; flex: none; }
.qf-body { flex: 1; min-height: 0; display: flex; overflow: hidden; }
.qf-list { flex: 1; min-width: 0; padding: 1px 0 0 5px; overflow: hidden; }
.qf-list li { height: 18px; display: flex; align-items: center; gap: 3px; white-space: nowrap; }
.cb { width: 13px; height: 13px; border: 1px solid #777; background: #fff; flex: none; position: relative; }
.cb.on::after {
  content: "";
  position: absolute;
  left: 3px; top: 0;
  width: 5px; height: 9px;
  border: solid #111;
  border-width: 0 2px 2px 0;
  transform: rotate(40deg);
}
.scroll { width: 16px; flex: none; background: #f0f0f0; display: flex; flex-direction: column; align-items: center; }
.arrow { width: 9px; height: 6px; margin: 7px 0 5px; flex: none; }
.track { width: 15px; flex: none; background: #cdcdcd; }
.track.t1 { height: 44px; margin-bottom: auto; }
.track.t2 { height: 130px; margin-bottom: auto; }

/* tabs */
.tabbar {
  height: 34px;
  flex: none;
  display: flex;
  border-bottom: 1px solid #a8a8a8;
  padding: 2px 0 0 7px;
  background: linear-gradient(#a8a8a8, #a8a8a8) top / 100% 1px no-repeat;
}
.tab-tools { width: 76px; flex: none; display: flex; align-items: flex-start; padding: 4px 0 0 7px; gap: 8px; }
.tt { width: 15px; height: 15px; flex: none; }
.tt-rows { height: 12px; margin-top: 2px; }
.tab {
  height: 26px;
  display: flex; align-items: center;
  justify-content: space-between;
  background: #e7e7e7;
  border-left: 1px solid #999;
  padding: 0 8px 0 4px;
  flex: none;
}
.t1w { width: 76px; }
.t2w { width: 86px; }
.t3w { width: 98px; }
.tab.active {
  width: 160px; height: 29px;
  margin-top: -2px;
  background: #fff;
  border: 1px solid #a8a8a8;
  border-bottom: 0;
  font-weight: bold;
  padding: 0 6px 0 9px;
}

.status { height: 20px; flex: none; background: #f0f0f0; }
```
